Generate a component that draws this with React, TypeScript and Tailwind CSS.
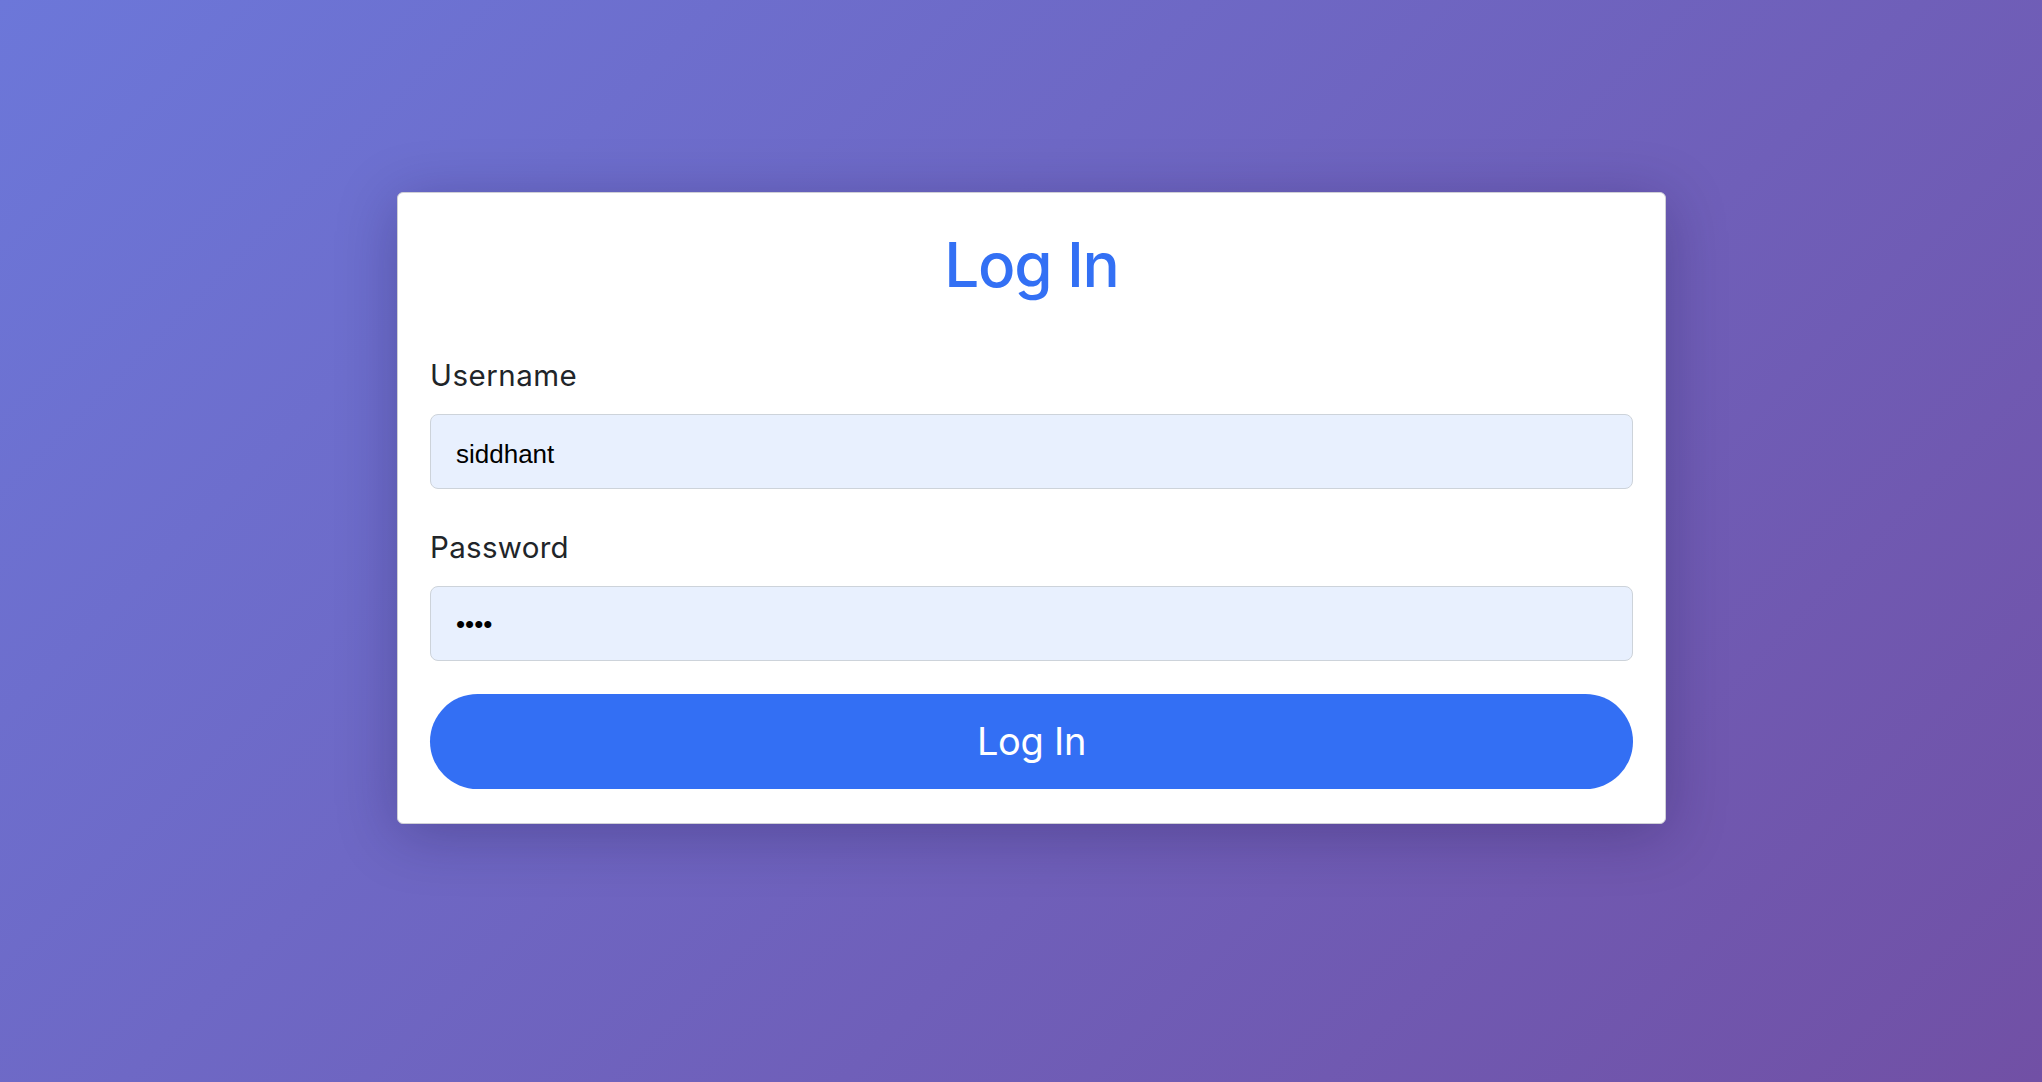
import React from "react";

export default function App() {
  return (
    <div className="min-h-screen w-full bg-[linear-gradient(135deg,#6c77d9_0%,#7150a5_100%)] pt-[192px] pl-[397px] h-[1082px] overflow-hidden">
      <div className="w-[1269px] h-[632px] bg-white border border-[#cfcfd6] rounded-[6px] shadow-[0_10px_60px_rgba(20,10,60,0.28)] pt-[41px] px-[32px] pb-[32px] flex flex-col font-['Inter',sans-serif]">
        <h1 className="text-[62px] leading-[62px] font-medium text-[#3370f4] text-center tracking-[-1.2px]">
          Log In
        </h1>
        <label className="mt-[65px] text-[29.5px] leading-[29px] text-[#212529] font-normal tracking-[0.5px]">
          Username
        </label>
        <input
          readOnly
          value="siddhant"
          className="mt-[24px] h-[75px] w-full rounded-[8px] border border-[#cdd3da] bg-[#e8f0fe] pl-[25px] pt-[6px] text-[26px] text-black font-['Liberation_Sans',Arial,sans-serif] outline-none"
        />
        <label className="mt-[44px] text-[29.5px] leading-[29px] text-[#212529] font-normal tracking-[0.3px]">
          Password
        </label>
        <input
          readOnly
          type="password"
          value="abcd"
          className="mt-[24px] h-[75px] w-full rounded-[8px] border border-[#cdd3da] bg-[#e8f0fe] pl-[25px] pt-[2px] text-[26px] text-black font-['Liberation_Sans',Arial,sans-serif] outline-none"
        />
        <button className="mt-[33px] h-[95px] w-full rounded-full bg-[#336ff4] text-white text-[38px] font-normal flex items-center justify-center tracking-[-0.3px]">
          Log In
        </button>
      </div>
    </div>
  );
}
